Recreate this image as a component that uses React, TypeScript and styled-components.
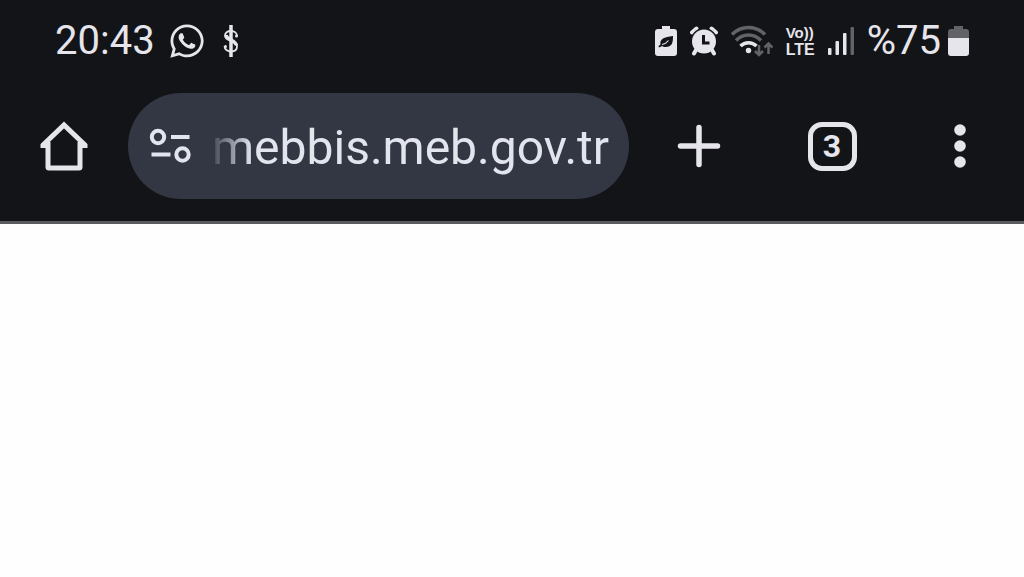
import React from "react";
import styled, { createGlobalStyle } from "styled-components";
import { FaWhatsapp } from "react-icons/fa";

const ink = "#e6e5ec";
const dim = "#626267";

const GlobalStyle = createGlobalStyle`
  * { box-sizing: border-box; }
  body {
    margin: 0;
    background: #fefefe;
    font-family: Roboto, "Liberation Sans", sans-serif;
  }
`;

const Header = styled.header`
  background: #131418;
  color: ${ink};
  border-bottom: 3px solid #5b5a5f;
`;

const StatusBar = styled.div`
  display: flex;
  align-items: center;
  justify-content: space-between;
  height: 81px;
  padding: 0 55px;
`;

const StatusGroup = styled.div`
  display: flex;
  align-items: center;
  gap: 13px;
`;

const StatusText = styled.span`
  font-size: 40px;
  line-height: 40px;
`;

const Notifications = styled.div`
  display: flex;
  align-items: center;
  gap: 16px;
`;

const Volte = styled.span`
  display: flex;
  flex-direction: column;
  font-family: "Liberation Sans", sans-serif;
  line-height: 17px;
`;

const VolteLine = styled.span<{ $size: number }>`
  font-size: ${(p) => p.$size}px;
  font-weight: 700;
`;

const Percent = styled.div`
  display: flex;
  align-items: center;
  gap: 7px;
`;

const Toolbar = styled.nav`
  display: flex;
  align-items: center;
  padding: 12px 0 22px;
`;

const ToolButton = styled.button<{ $width: number }>`
  display: flex;
  align-items: center;
  justify-content: center;
  flex: none;
  width: ${(p) => p.$width}px;
  height: 96px;
  padding: 0;
  border: 0;
  background: none;
  color: inherit;
  cursor: pointer;
`;

const AddressBar = styled.div`
  display: flex;
  align-items: center;
  flex: 1;
  min-width: 0;
  height: 106px;
  padding: 0 16px 0 20px;
  gap: 20px;
  border-radius: 53px;
  background: #323743;
`;

const SiteButton = styled.button`
  display: flex;
  flex: none;
  padding: 0;
  border: 0;
  background: none;
  color: inherit;
  cursor: pointer;
`;

const AddressInput = styled.input`
  flex: 1;
  min-width: 0;
  height: 66px;
  padding: 2px 0 0;
  border: 0;
  outline: 0;
  background: none;
  color: #e2e4ee;
  font: 400 48px/64px Roboto, "Liberation Sans", sans-serif;
  mask-image: linear-gradient(to right, rgba(0, 0, 0, 0.1), #000 40px);
`;

const TabCount = styled.span`
  display: flex;
  align-items: center;
  justify-content: center;
  width: 49px;
  height: 49px;
  border: 5px solid ${ink};
  border-radius: 14px;
  font: 700 32px/32px Roboto, "Liberation Sans", sans-serif;
`;

const Page = styled.main`
  min-height: 320px;
`;

const DollarIcon = () => (
  <svg width="18" height="34" viewBox="0 0 18 34" fill="none" stroke={ink} aria-hidden="true">
    <path d="M9 1v32" strokeWidth="3.500" />
    <path d="M15 12c0-3-2.500-5-6-5s-6 1.800-6 4.800c0 6.400 12 4 12 10.700 0 3.200-2.600 5-6 5s-6.500-2-6.500-5.500" strokeWidth="1.800" />
    <path d="M4 11c1 5 9.500 5 10.500 10.500" strokeWidth="3.500" />
    <circle cx="14.500" cy="12" r="1.500" fill={ink} stroke="none" />
    <circle cx="3.500" cy="22.500" r="1.500" fill={ink} stroke="none" />
  </svg>
);

const LeafBatteryIcon = () => (
  <svg width="22" height="30" viewBox="0 0 22 30" aria-hidden="true">
    <path d="M7 0h8v3h4a3 3 0 0 1 3 3v21a3 3 0 0 1-3 3H3a3 3 0 0 1-3-3V6a3 3 0 0 1 3-3h4z" fill={ink} />
    <path d="M18 10c0 7-1 11-7.500 11-1.500 0-2.500-.4-3.300-1L4 21.500l-.5-1.500 2-1.500C4.500 13 9 11 18 10z" fill="#131418" />
    <path d="M7 18.500c3-.5 5-2 6.500-4" stroke={ink} strokeWidth="1.200" fill="none" />
  </svg>
);

const AlarmIcon = () => (
  <svg width="28" height="30" viewBox="0 0 28 30" fill="none" stroke={ink} strokeLinecap="round" aria-hidden="true">
    <path d="M2 6.500l4.500-4M26 6.500l-4.500-4" strokeWidth="4" />
    <circle cx="14" cy="15.500" r="13.500" fill="#131418" stroke="none" />
    <path d="M6 24l-2 3.500M22 24l2 3.500" strokeWidth="4" />
    <circle cx="14" cy="15.500" r="12" fill={ink} stroke="none" />
    <path d="M13.500 9v8h6" stroke="#131418" strokeWidth="3" strokeLinecap="butt" />
  </svg>
);

const WifiIcon = () => (
  <svg width="42" height="32" viewBox="0 0 42 32" fill="none" aria-hidden="true">
    <path d="M1 9.500C10 0 25 0 34 9.500" stroke={dim} strokeWidth="3.500" />
    <path d="M5 15.500c7-7.500 18-7.500 25 0" stroke={dim} strokeWidth="3.500" />
    <path d="M9.500 21c4.500-4.500 11.500-4.500 16 0" stroke={ink} strokeWidth="3.500" />
    <circle cx="17.500" cy="25.500" r="2.700" fill={ink} />
    <path d="M28 20v10M24 26l4 4 4-4M37.500 29V18.500M33.500 22.500l4-4 4 4" stroke={dim} strokeWidth="2.500" />
  </svg>
);

const SignalIcon = () => (
  <svg width="26" height="28" viewBox="0 0 26 28" fill={ink} aria-hidden="true">
    <rect x="0" y="21" width="3.500" height="7" rx="1" />
    <rect x="7.500" y="14" width="3.500" height="14" rx="1" />
    <rect x="15" y="6" width="3.500" height="22" rx="1" />
    <rect x="22.500" y="0" width="3.500" height="28" rx="1" fill={dim} />
  </svg>
);

const BatteryIcon = () => (
  <svg width="21" height="30" viewBox="0 0 21 30" aria-hidden="true">
    <path d="M6 0h9v3h3a3 3 0 0 1 3 3v6H0V6a3 3 0 0 1 3-3h3z" fill={dim} />
    <path d="M0 12h21v15a3 3 0 0 1-3 3H3a3 3 0 0 1-3-3z" fill={ink} />
  </svg>
);

const HomeIcon = () => (
  <svg width="50" height="50" viewBox="0 0 50 50" fill="none" stroke={ink} strokeWidth="5" aria-hidden="true">
    <path d="M3.500 24.500L25 4l21.500 20.500" />
    <path d="M9 21v25a1 1 0 0 0 1 1h30a1 1 0 0 0 1-1V21" />
    <path d="M1.500 25h7M41.500 25h7" strokeWidth="4" />
  </svg>
);

const TuneIcon = () => (
  <svg width="44" height="36" viewBox="0 0 44 36" fill="none" stroke="#e2e4ee" strokeWidth="4" aria-hidden="true">
    <circle cx="10" cy="9" r="6.200" />
    <path d="M23 9h18.500M3.500 26.500h19" />
    <circle cx="34.500" cy="26.500" r="6.200" />
  </svg>
);

const PlusIcon = () => (
  <svg width="44" height="44" viewBox="0 0 44 44" stroke={ink} strokeWidth="5.500" strokeLinecap="round" aria-hidden="true">
    <path d="M22 3.500v37M3.500 22h37" />
  </svg>
);

const MoreIcon = () => (
  <svg width="12" height="44" viewBox="0 0 12 44" fill={ink} aria-hidden="true">
    <circle cx="6" cy="6" r="5.800" />
    <circle cx="6" cy="22" r="5.800" />
    <circle cx="6" cy="38" r="5.800" />
  </svg>
);

export default function App() {
  return (
    <>
      <GlobalStyle />
      <Header>
        <StatusBar>
          <StatusGroup>
            <StatusText>20:43</StatusText>
            <Notifications>
              <FaWhatsapp size={38} color={ink} aria-hidden="true" />
              <DollarIcon />
            </Notifications>
          </StatusGroup>
          <StatusGroup>
            <LeafBatteryIcon />
            <AlarmIcon />
            <WifiIcon />
            <Volte>
              <VolteLine $size={15}>Vo))</VolteLine>
              <VolteLine $size={16}>LTE</VolteLine>
            </Volte>
            <SignalIcon />
            <Percent>
              <StatusText>%75</StatusText>
              <BatteryIcon />
            </Percent>
          </StatusGroup>
        </StatusBar>
        <Toolbar aria-label="Browser">
          <ToolButton $width={128} aria-label="Home">
            <HomeIcon />
          </ToolButton>
          <AddressBar>
            <SiteButton aria-label="Site settings">
              <TuneIcon />
            </SiteButton>
            <AddressInput aria-label="Address" type="text" defaultValue="mebbis.meb.gov.tr" spellCheck={false} />
          </AddressBar>
          <ToolButton $width={140} aria-label="New tab">
            <PlusIcon />
          </ToolButton>
          <ToolButton $width={126} aria-label="Open tabs">
            <TabCount>3</TabCount>
          </ToolButton>
          <ToolButton $width={129} aria-label="Menu">
            <MoreIcon />
          </ToolButton>
        </Toolbar>
      </Header>
      <Page />
    </>
  );
}
